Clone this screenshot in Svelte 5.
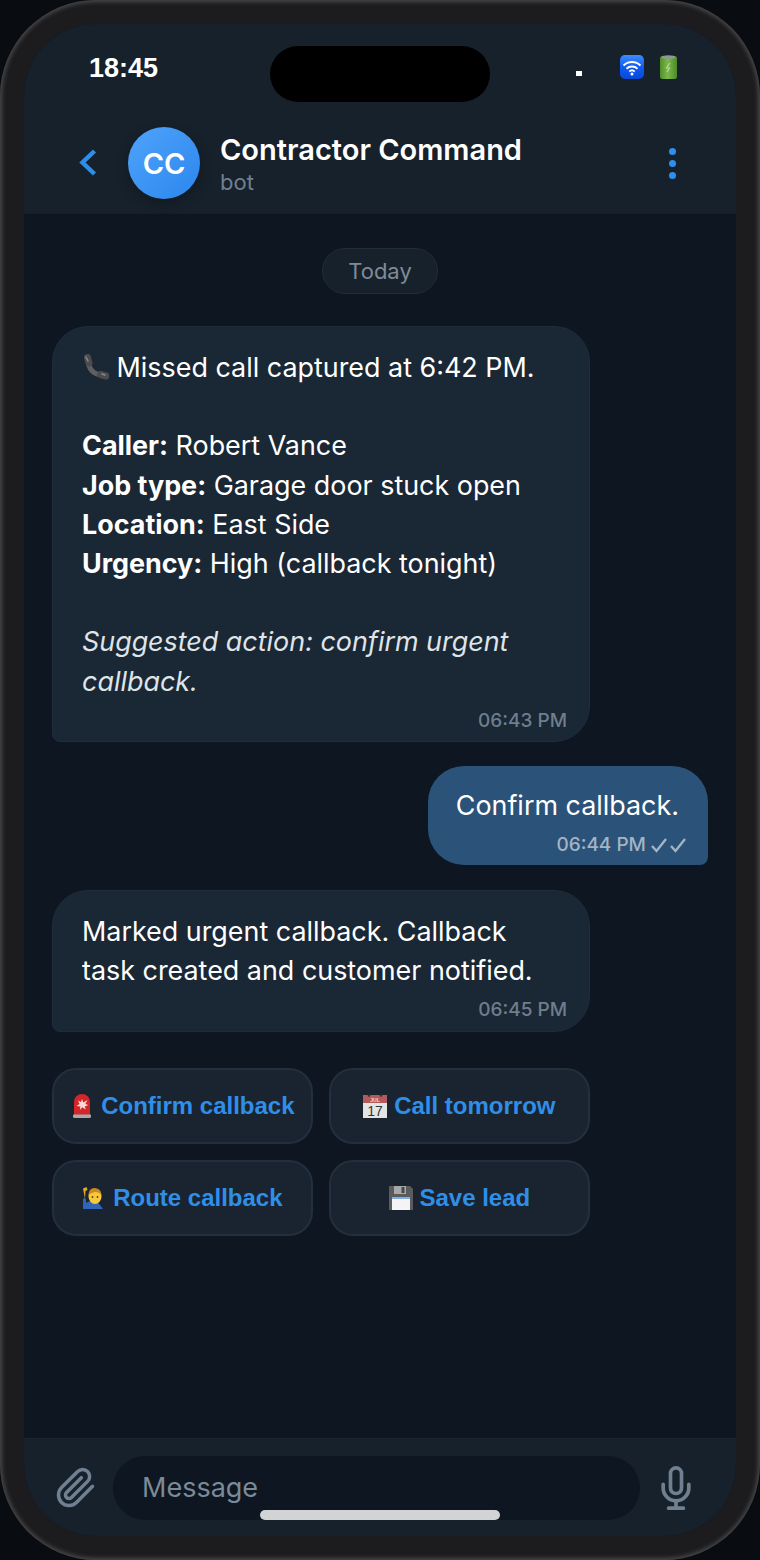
<script>
  const buttons = [
    { icon: 'siren', label: 'Confirm callback' },
    { icon: 'calendar', label: 'Call tomorrow' },
    { icon: 'person', label: 'Route callback' },
    { icon: 'floppy', label: 'Save lead' }
  ];
</script>

<div class="phone">
  <div class="screen">
    <div class="island"></div>
    <header class="top">
      <div class="status">
        <span class="clock">18:45</span>
        <span class="signal"></span>
        <svg class="wifi" viewBox="0 0 24 24" fill="none">
          <defs><linearGradient id="wifibg" x1="0" y1="0" x2="0" y2="1">
            <stop offset="0" stop-color="#3f8cff" /><stop offset=".5" stop-color="#0f5cf0" /><stop offset="1" stop-color="#0a48d8" />
          </linearGradient></defs>
          <rect width="24" height="24" rx="5" fill="url(#wifibg)" />
          <path d="M3.500 10.500a12 12 0 0 1 17 0M6.500 13.700a8 8 0 0 1 11 0M9.300 16.600a4 4 0 0 1 5.400 0" stroke="#fff" stroke-width="1.900" />
          <circle cx="12" cy="19" r="1.500" fill="#fff" />
        </svg>
        <svg class="batt" viewBox="0 0 17 24" fill="none">
          <defs><linearGradient id="battbg" x1="0" y1="0" x2="1" y2="0">
            <stop offset="0" stop-color="#4f8f2a" /><stop offset=".45" stop-color="#7cb84a" /><stop offset="1" stop-color="#4c8a28" />
          </linearGradient></defs>
          <rect y="1" width="17" height="23" rx="2.500" fill="url(#battbg)" />
          <ellipse cx="8.500" cy="2.200" rx="7" ry="2" fill="#8d9a8c" />
          <path d="M10 8 6.500 13h3L7 17" stroke="#b9d7a0" stroke-width="1.200" />
        </svg>
      </div>
      <div class="bar">
        <svg class="back" viewBox="0 0 18 28" fill="none"><path d="M15.500 2 3.500 13.500l12 11.500" /></svg>
        <div class="avatar">CC</div>
        <div class="who">
          <div class="name">Contractor Command</div>
          <div class="role">bot</div>
        </div>
        <div class="more"><i></i><i></i><i></i></div>
      </div>
    </header>

    <main class="chat">
      <div class="day">Today</div>

      <div class="msg in">
        <p><svg class="handset" viewBox="0 0 27 27" fill="none">
          <path d="M6 6Q6.500 20 21.500 21.500" stroke="#5f5f60" stroke-width="5" />
          <path d="M5.500 3.500 7 9M18.500 20.500 24 22" stroke="#4c4c4e" stroke-width="7" stroke-linecap="round" />
          <path d="M4 3 6 7M20 20 23 21" stroke="#8a8a8c" stroke-width="1.500" stroke-linecap="round" />
        </svg> Missed call captured at 6:42 PM.</p>
        <p class="gap"><b>Caller:</b> Robert Vance<br /><b>Job type:</b> Garage door stuck open<br /><b>Location:</b> East Side<br /><b>Urgency:</b> High (callback tonight)</p>
        <p class="gap sug"><em>Suggested action: confirm urgent callback.</em></p>
        <div class="time">06:43 PM</div>
      </div>

      <div class="msg out">
        <p>Confirm callback.</p>
        <div class="time">06:44 PM <svg class="ticks" viewBox="0 0 35 16" fill="none"><path d="M1 9l4.500 5L15 2M20 9l4.500 5L34 2" /></svg></div>
      </div>

      <div class="msg in last">
        <p>Marked urgent callback. Callback task created and customer notified.</p>
        <div class="time">06:45 PM</div>
      </div>

      <div class="actions">
        {#each buttons as b}
          <button>
            {#if b.icon === 'siren'}
              <svg class="emo" viewBox="0 0 24 24">
                <rect x="3" y="20" width="18" height="4" rx="1.500" fill="#a9a9a9" />
                <path d="M4 20.500V8a8 8 0 0 1 16 0v12.500z" fill="#d3262a" />
                <path d="M12 5l1.300 3.500L17.500 6l-2.200 4 3 1-3.500 1.500 1 3-3.600-2.300L10 16l.3-3.500L6.500 12l3-2L8 6.500l3 1.500z" fill="#ffd9d4" />
              </svg>
            {:else if b.icon === 'calendar'}
              <svg class="emo" viewBox="0 0 24 24">
                <rect y="1" width="24" height="23" fill="#e4e4e4" />
                <rect y="1" width="24" height="8" fill="#b35a5c" />
                <circle cx="6" cy="1.500" r="1.300" fill="#333" /><circle cx="18" cy="1.500" r="1.300" fill="#333" />
                <text x="12" y="7.500" class="jul">JUL</text>
                <text x="12" y="22" class="seventeen">17</text>
              </svg>
            {:else if b.icon === 'person'}
              <svg class="emo" viewBox="0 0 24 24">
                <path d="M1 23V14q0-2 1.500-2T4 14v3q4-3 8-2.500t9 8.500z" fill="#2f66b8" />
                <path d="M3 13 1 2.500 4.500 1l1 3-2 1z" fill="#e0a92e" />
                <ellipse cx="13" cy="10.500" rx="6.500" ry="7.500" fill="#f9c93c" />
                <path d="M6.500 9Q7 1.500 13 2t6.500 7q-3-3.500-6.500-3T6.500 9z" fill="#c98a1e" />
                <circle cx="10.500" cy="11" r=".9" fill="#5a3a10" /><circle cx="15.500" cy="11" r=".9" fill="#5a3a10" />
              </svg>
            {:else}
              <svg class="emo" viewBox="0 0 24 24">
                <path d="M0 0h21l3 3v21H0z" fill="#5b5b5d" />
                <rect x="5" y="0" width="12" height="8" fill="#a8a8aa" />
                <rect x="12.500" y="1" width="3" height="6" fill="#48484a" />
                <rect x="3" y="11" width="18" height="13" fill="#f4f4f6" />
                <rect x="3" y="11" width="18" height="2" fill="#7fb2e8" />
              </svg>
            {/if}
            {b.label}
          </button>
        {/each}
      </div>
    </main>

    <footer class="foot">
      <svg class="tool clip" viewBox="0 0 24 24" fill="none"><path d="M21.440 11.050l-9.190 9.190a6 6 0 0 1-8.490-8.490l9.190-9.190a4 4 0 0 1 5.660 5.660l-9.200 9.190a2 2 0 0 1-2.830-2.830l8.490-8.480" /></svg>
      <div class="input">Message</div>
      <svg class="tool" viewBox="0 0 24 24" fill="none"><path d="M12 1a3 3 0 0 0-3 3v8a3 3 0 0 0 6 0V4a3 3 0 0 0-3-3z" /><path d="M19 10v2a7 7 0 0 1-14 0v-2" /><path d="M12 19v4" /><path d="M8 23h8" /></svg>
    </footer>
    <div class="home"></div>
  </div>
</div>

<style>
  :global(body) { margin: 0; background: #090c10; }
  .phone { width: 760px; height: 1560px; box-sizing: border-box; padding: 24px; border-radius: 96px;
           background: #1c1c1e; box-shadow: inset 0 0 4px 2px #4a4a4c; font-family: Inter, sans-serif; }
  .screen { position: relative; height: 1512px; border-radius: 72px; overflow: hidden;
            display: flex; flex-direction: column; background: #0e1621; color: #fff; }
  .island { position: absolute; left: 246px; top: 22px; width: 220px; height: 56px; border-radius: 28px; background: #000; }

  .top { background: #17212b; border-bottom: 1px solid #141d28; height: 190px; box-sizing: border-box; }
  .status { height: 88px; display: flex; align-items: center; padding-left: 65px; box-sizing: border-box; }
  .clock { font: 700 27px "Liberation Sans", sans-serif; width: 487px; margin-top: 1px; }
  .signal { width: 6px; height: 5px; background: #fff; margin-top: 11px; margin-right: 38px; }
  .wifi { width: 24px; height: 24px; margin-right: 16px; transform: translateY(-1px); }
  .batt { width: 17px; height: 24px; transform: translateY(-1px); }

  .bar { display: flex; align-items: center; padding: 15px 60px 0 55px; }
  .back { width: 18px; height: 28px; margin-right: 31px; }
  .back path { stroke: #2b8ee8; stroke-width: 4.500; }
  .avatar { width: 72px; height: 72px; border-radius: 50%; display: grid; place-items: center;
            background: linear-gradient(135deg, #4fa3fa, #2b86ee); box-shadow: 0 4px 12px rgba(0, 0, 0, .25);
            font-size: 29px; font-weight: 600; padding-top: 1px; box-sizing: border-box; }
  .who { margin-left: 20px; flex: 1; padding-top: 2px; }
  .name { font-size: 29px; font-weight: 600; line-height: 36px; }
  .role { font-size: 22px; line-height: 28px; color: #708090; }
  .more { display: flex; flex-direction: column; gap: 5px; }
  .more i { width: 7px; height: 7px; border-radius: 50%; background: #2f8fee; }

  .chat { flex: 1; padding: 34px 28px 0; display: flex; flex-direction: column; align-items: flex-start; gap: 24px; }
  .day { align-self: center; box-sizing: border-box; height: 46px; padding: 0 25.500px; border-radius: 23px; margin-bottom: 8px;
         background: #17212b; border: 1px solid #222d39; color: #7d8b99; font-size: 22px; line-height: 44px; }
  .msg { box-sizing: border-box; max-width: 538px; font-size: 26.900px; line-height: 39.200px; }
  .msg p { margin: 0; }
  .gap { margin-top: 39.200px !important; }
  .sug { color: #dfe4e8; }
  .handset { width: 27px; height: 27px; vertical-align: -4px; }
  .in { width: 538px; padding: 21px 22px 8px 29px; background: #1a2735; border: 1px solid #1f2d3b; border-radius: 36px 36px 36px 8px; }
  .in p { padding-right: 8px; }
  .in.last { min-height: 142px; }
  .out { align-self: flex-end; background: #2b5278; border-radius: 36px 36px 8px 36px; padding: 20px 22px 8px 28px; margin-bottom: 1px; }
  .out p { padding-right: 7px; }
  .time { margin-top: 8px; font-size: 19px; line-height: 24px; text-align: right; color: #6f7e8c; font-weight: 500; }
  .out .time { color: #a3b4c6; }
  .ticks { width: 35px; height: 16px; vertical-align: -2px; }
  .ticks path { stroke: #a3b4c6; stroke-width: 2.400; }

  .actions { margin-top: 12px; width: 538px; display: grid; grid-template-columns: 1fr 1fr; gap: 16px; }
  .actions button { height: 76px; padding: 0; border-radius: 24px; background: #192430; border: 2px solid #232f3c;
                    color: #2f8fe8; font: 700 24px "Liberation Sans", sans-serif; }
  .emo { width: 24px; height: 24px; vertical-align: -4px; }
  .jul { font: 700 5px "Liberation Sans", sans-serif; fill: #f0d8d8; text-anchor: middle; }
  .seventeen { font: 400 14px "Liberation Sans", sans-serif; fill: #333; text-anchor: middle; }

  .foot { height: 98px; box-sizing: border-box; background: #17212b; border-top: 1px solid #1a2530;
          display: flex; align-items: center; padding: 0 38px 0 31px; gap: 14px; }
  .tool { width: 44px; height: 44px; flex: none; }
  .clip { width: 42px; height: 42px; margin-right: 2px; }
  .tool path { stroke: #708090; stroke-width: 2; stroke-linecap: round; stroke-linejoin: round; }
  .input { flex: 1; height: 64px; border-radius: 32px; background: #0e1621; color: #7b8a99; font-size: 27px;
           line-height: 64px; padding-left: 29px; }
  .home { position: absolute; left: 236px; bottom: 16px; width: 240px; height: 10px; border-radius: 5px; background: #d1d3d5; }
</style>
